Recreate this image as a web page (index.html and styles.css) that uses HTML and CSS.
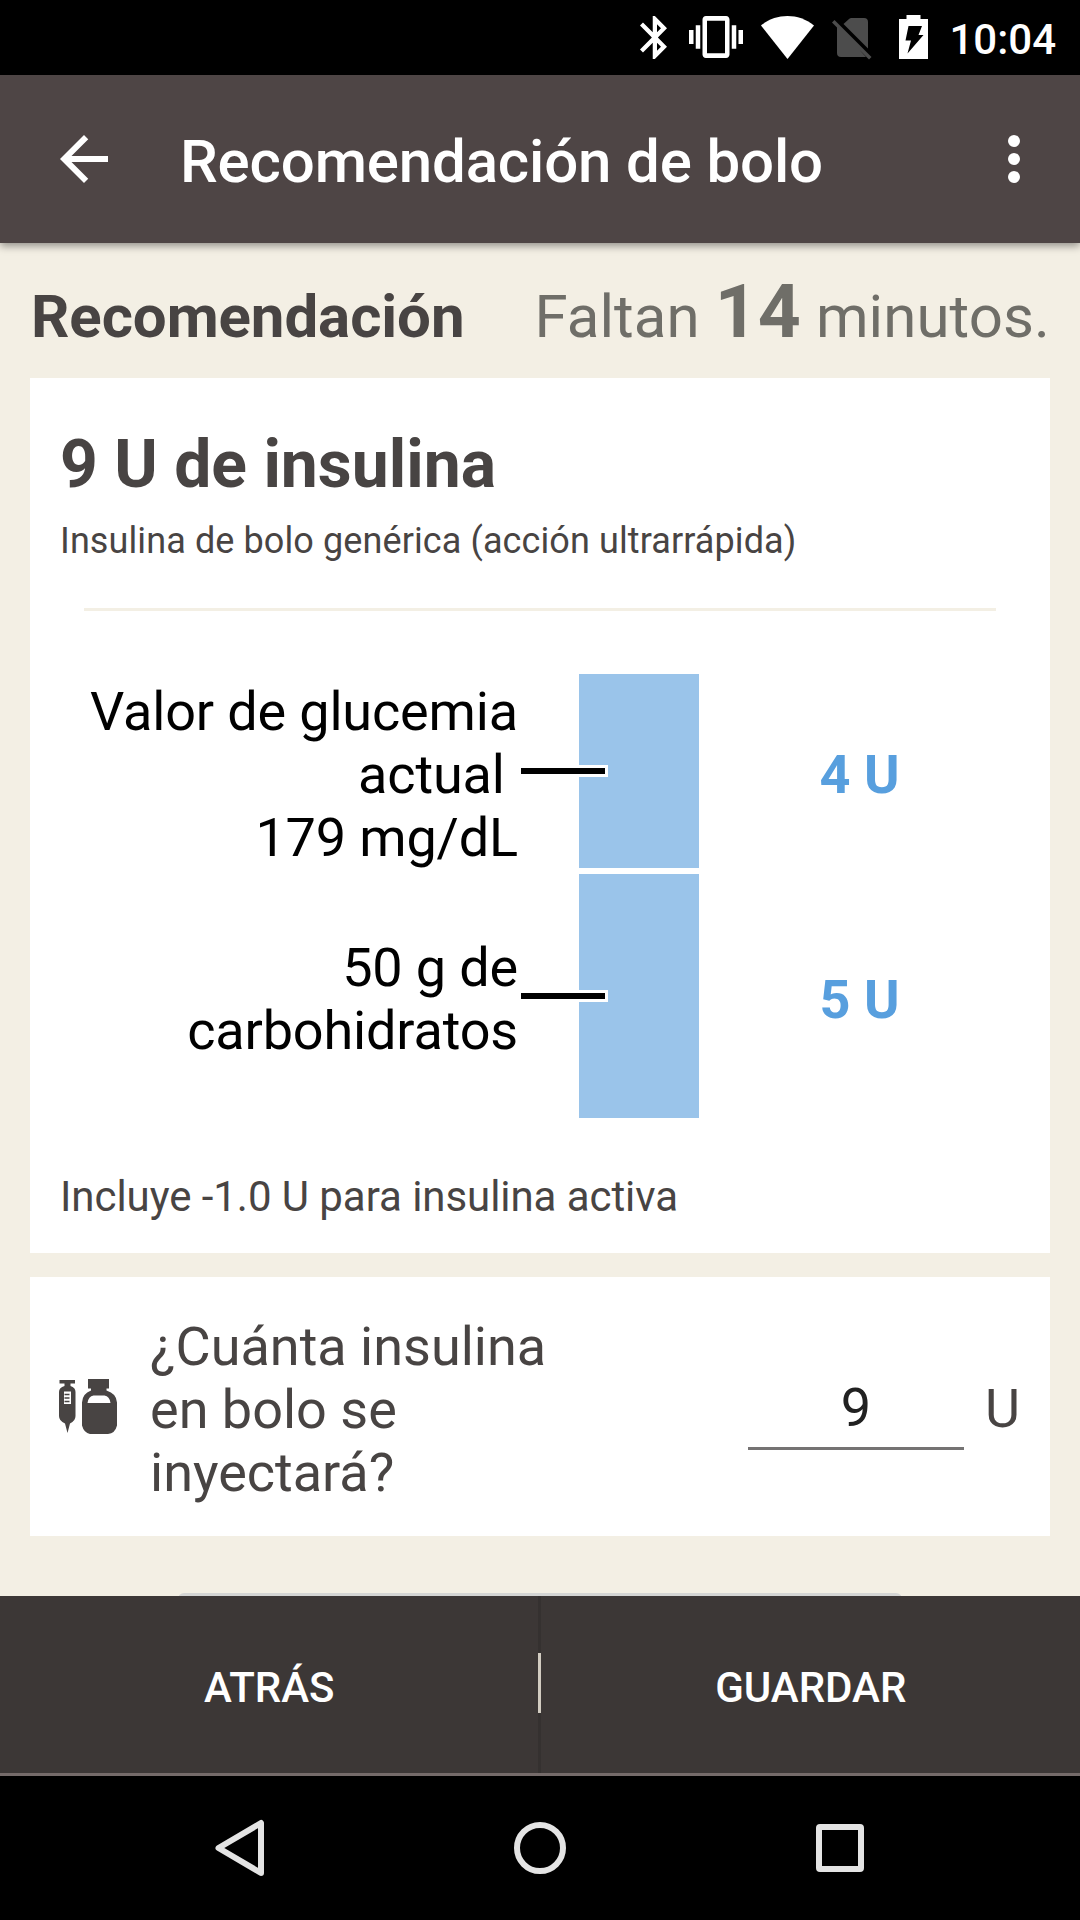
FILE: index.html
```
<!DOCTYPE html>
<html lang="es">
<head>
    <meta charset="UTF-8">
    <meta name="viewport" content="width=device-width, initial-scale=1.0">
    <title>Recomendación de bolo</title>
    <link rel="stylesheet" href="styles.css">
</head>
<body>

    <div class="status-bar">
        <svg class="icon-bluetooth" width="27" height="43" viewBox="5 2 12.71 20" preserveAspectRatio="none"><path fill="#fff" d="M17.71 7.71L12 2h-1v7.59L6.41 5 5 6.41 10.59 12 5 17.59 6.41 19 11 14.41V22h1l5.71-5.71-4.3-4.29 4.3-4.29zM13 5.83l1.88 1.88L13 9.59V5.83zm1.88 10.46L13 18.17v-3.76l1.88 1.88z"/></svg>
        <svg class="icon-vibrate" width="54" height="42" viewBox="0 3 24 18" preserveAspectRatio="none"><path fill="#fff" d="M0 15h2V9H0v6zm3 2h2V7H3v10zm19-8v6h2V9h-2zm-3 8h2V7h-2v10zM16.5 3h-9C6.67 3 6 3.67 6 4.5v15c0 .83.67 1.5 1.5 1.5h9c.83 0 1.5-.67 1.5-1.5v-15c0-.83-.67-1.5-1.5-1.5zM16 19H8V5h8v14z"/></svg>
        <svg class="icon-wifi" width="53" height="43" viewBox="0 0 53 43"><path fill="#fff" d="M0 9.5C8 3 17 0 26.5 0S45 3 53 9.5L26.5 43z"/></svg>
        <svg class="icon-sim" width="40" height="42" viewBox="0 0 40 42"><path fill="#4c4c4c" d="M5 8l29 31h-25q-4 0-4-4zM11.5 6l5.500-5q1-1 2.500-1H32q4 0 4 4v26.500zM0 4.500l2.500-2.500L39.500 39l-2.500 2.500z"/></svg>
        <svg class="icon-battery" width="29" height="44" viewBox="0 0 29 44"><path fill="#fff" fill-rule="evenodd" d="M7.500 0h14v4H29v40H0V4h7.500zM9.500 11L6.500 25.500H12L8.500 38.500 24.500 20H19.500L23 11z"/></svg>
        <span class="clock">10:04</span>
    </div>

    <div class="toolbar">
        <svg class="icon-back" width="72" height="72" viewBox="0 0 24 24"><path fill="#fff" d="M20 11H7.83l5.59-5.59L12 4l-8 8 8 8 1.410-1.410L7.83 13H20v-2z"/></svg>
        <h1>Recomendación de bolo</h1>
        <svg class="icon-more" width="12" height="48" viewBox="0 0 12 48"><g fill="#fff"><circle cx="6" cy="6" r="6"/><circle cx="6" cy="24" r="6"/><circle cx="6" cy="42" r="6"/></g></svg>
    </div>

    <div class="content">
        <div class="section-header">
            <h2>Recomendación</h2>
            <div class="remaining">Faltan <b>14</b> minutos.</div>
        </div>

        <div class="card">
            <div class="dose">9 U de insulina</div>
            <div class="insulin-name">Insulina de bolo genérica (acción ultrarrápida)</div>
            <div class="divider"></div>
            <div class="chart">
                <div class="chart-label">Valor de glucemia
actual 
179 mg/dL</div>
                <div class="bar"><span class="pointer"></span></div>
                <div class="chart-value">4 U</div>

                <div class="chart-label">50 g de
carbohidratos</div>
                <div class="bar"><span class="pointer"></span></div>
                <div class="chart-value">5 U</div>
            </div>
            <div class="note">Incluye -1.0 U para insulina activa</div>
        </div>

        <div class="card question">
            <svg class="icon-insulin" width="60" height="56" viewBox="0 0 60 56">
                <g fill="#484443">
                    <path d="M1.500 1H17v3.500H12.500V7q5 1.500 5 6v24q0 5-5.500 7.500L9.500 54 7 44.500Q1 42 1 37V13q0-4.500 5.500-6V4.500h-5z"/>
                    <path d="M30 0h21v9.500h-2.500v2q10 3 10.500 12v23q-2 8-9 8.500H32q-6-1-8-8.500v-23q.5-9 9-12v-2h-3z"/>
                </g>
                <path fill="#fff" d="M6 12.500h7v12.500H6zM29.500 24q1-7 6-7.500h11q5 .5 6 7.500z"/>
                <path stroke="#484443" stroke-width="1.500" d="M6.500 15.500h5M6.500 19h5M6.500 22.500h5"/>
            </svg>
            <div class="question-text">¿Cuánta insulina<br>en bolo se<br>inyectará?</div>
            <input type="text" value="9">
            <span class="unit">U</span>
        </div>

        <div class="more-button"></div>
    </div>

    <div class="actions">
        <button>ATRÁS</button>
        <div class="actions-divider"></div>
        <button>GUARDAR</button>
    </div>

    <div class="nav-bar">
        <svg width="300" height="144" viewBox="0 0 300 144"><path fill="none" stroke="#e4e4e4" stroke-width="6" stroke-linejoin="round" d="M171 47v50L128.500 72z"/></svg>
        <svg width="300" height="144" viewBox="0 0 300 144"><circle cx="150" cy="72" r="23" fill="none" stroke="#e4e4e4" stroke-width="6"/></svg>
        <svg width="300" height="144" viewBox="0 0 300 144"><path fill="#e4e4e4" fill-rule="evenodd" d="M130 48h40q4 0 4 4v40q0 4-4 4h-40q-4 0-4-4V52q0-4 4-4zM132 54v36h36V54z"/></svg>
    </div>

</body>
</html>
```
FILE: styles.css
```
* {
    box-sizing: border-box;
}
body {
    font-family: Roboto, "Noto Sans", sans-serif;
    background-color: #f3efe4;
    margin: 0;
    width: 1080px;
    height: 1920px;
    display: flex;
    flex-direction: column;
    overflow: hidden;
    color: #484443;
}
svg {
    display: block;
    flex: none;
}
.status-bar {
    height: 75px;
    background-color: #000;
    display: flex;
    align-items: flex-start;
    justify-content: flex-end;
    padding: 15px 24px 0 0;
    color: #fff;
}
.icon-bluetooth {
    margin: 1px 22px 0 0;
}
.icon-vibrate {
    margin: 1px 18px 0 0;
}
.icon-wifi {
    margin: 1px 18px 0 0;
}
.icon-sim {
    margin: 3px 27px 0 0;
}
.icon-battery {
    margin-right: 21px;
}
.clock {
    font-size: 42px;
    font-weight: 500;
    line-height: 50px;
}
.toolbar {
    height: 168px;
    background-color: #4e4545;
    display: flex;
    align-items: center;
    padding: 0 60px 0 48px;
    box-shadow: 0 3px 8px rgba(0, 0, 0, 0.4);
    color: #fff;
}
h1 {
    flex: 1;
    margin: 5px 0 0 60px;
    font-size: 60px;
    font-weight: 500;
    line-height: 70px;
    letter-spacing: -0.15px;
}
.content {
    height: 1353px;
    padding: 0 30px;
    overflow: hidden;
}
/* the toolbar shadow falls over the content */
.toolbar, .actions {
    position: relative;
    z-index: 1;
}
.section-header {
    height: 135px;
    padding: 38px 0 0 1px;
    display: flex;
    justify-content: space-between;
    font-size: 60px;
    line-height: 71px;
}
h2 {
    margin: 0;
    font-size: 60px;
    font-weight: 700;
    letter-spacing: -0.08px;
}
.remaining {
    color: #6f6e68;
    letter-spacing: 0.08px;
}
.remaining b {
    font-size: 75px;
    line-height: 0;
}
.card {
    background-color: #fff;
    margin-bottom: 24px;
    padding: 48px 30px 31px;
}
.dose {
    font-size: 66px;
    font-weight: 700;
    line-height: 78px;
}
.insulin-name {
    margin-top: 16px;
    font-size: 36px;
    line-height: 42px;
    letter-spacing: 0.1px;
}
.divider {
    height: 3px;
    margin: 46px 24px 63px;
    background-color: #f3efe4;
}
.chart {
    display: grid;
    grid-template-columns: 458px 181px 1fr;
    grid-template-rows: 194px 244px;
    row-gap: 6px;
    align-items: center;
    font-size: 54px;
    line-height: 63px;
}
.chart-label {
    padding-top: 6px;
    text-align: right;
    white-space: pre;
    letter-spacing: -0.15px;
    color: #000;
}
.bar {
    position: relative;
    height: 100%;
    margin-left: 61px;
    background-color: #9ac4ea;
}
.pointer {
    position: absolute;
    left: -61px;
    top: 50%;
    width: 90px;
    height: 12px;
    margin-top: -6px;
    background-color: #000;
    border: 3px solid #fff;
}
.chart-value {
    padding: 6px 0 0;
    text-align: center;
    font-weight: 700;
    color: #589fde;
}
.note {
    margin-top: 54px;
    font-size: 42px;
    line-height: 50px;
    letter-spacing: -0.06px;
}
.question {
    display: flex;
    align-items: center;
    padding: 38px 30px 32px;
    margin-bottom: 57px;
    font-size: 54px;
    line-height: 63px;
}
.icon-insulin {
    margin: 0 32px 6px -2px;
}
.question-text {
    flex: 1;
}
.question input {
    width: 216px;
    height: 81px;
    margin: 0 21px 0 0;
    padding: 7px 0 8px;
    border: none;
    border-bottom: 3px solid #757373;
    background: none;
    font: inherit;
    text-align: center;
    color: #212121;
    outline: none;
}
.unit {
    margin-top: -2px;
}
.more-button {
    height: 40px;
    margin: 0 148px;
    border-radius: 6px;
    background-color: #d4d5d4;
}
.actions {
    height: 180px;
    display: flex;
    align-items: center;
    background-color: #3c3736;
    border-bottom: 3px solid #756b6a;
}
.actions button {
    flex: 1;
    height: 100%;
    padding: 6px 0 0;
    border: none;
    background: none;
    font-family: inherit;
    font-size: 42px;
    font-weight: 500;
    color: #fff;
}
.actions-divider {
    width: 3px;
    height: 100%;
    margin: 0 1px 0 -1px;
    background: linear-gradient(#353130 57px, #d2ccc1 57px, #d2ccc1 117px, #353130 117px);
}
.nav-bar {
    height: 144px;
    display: flex;
    justify-content: center;
    background-color: #000;
}
```
